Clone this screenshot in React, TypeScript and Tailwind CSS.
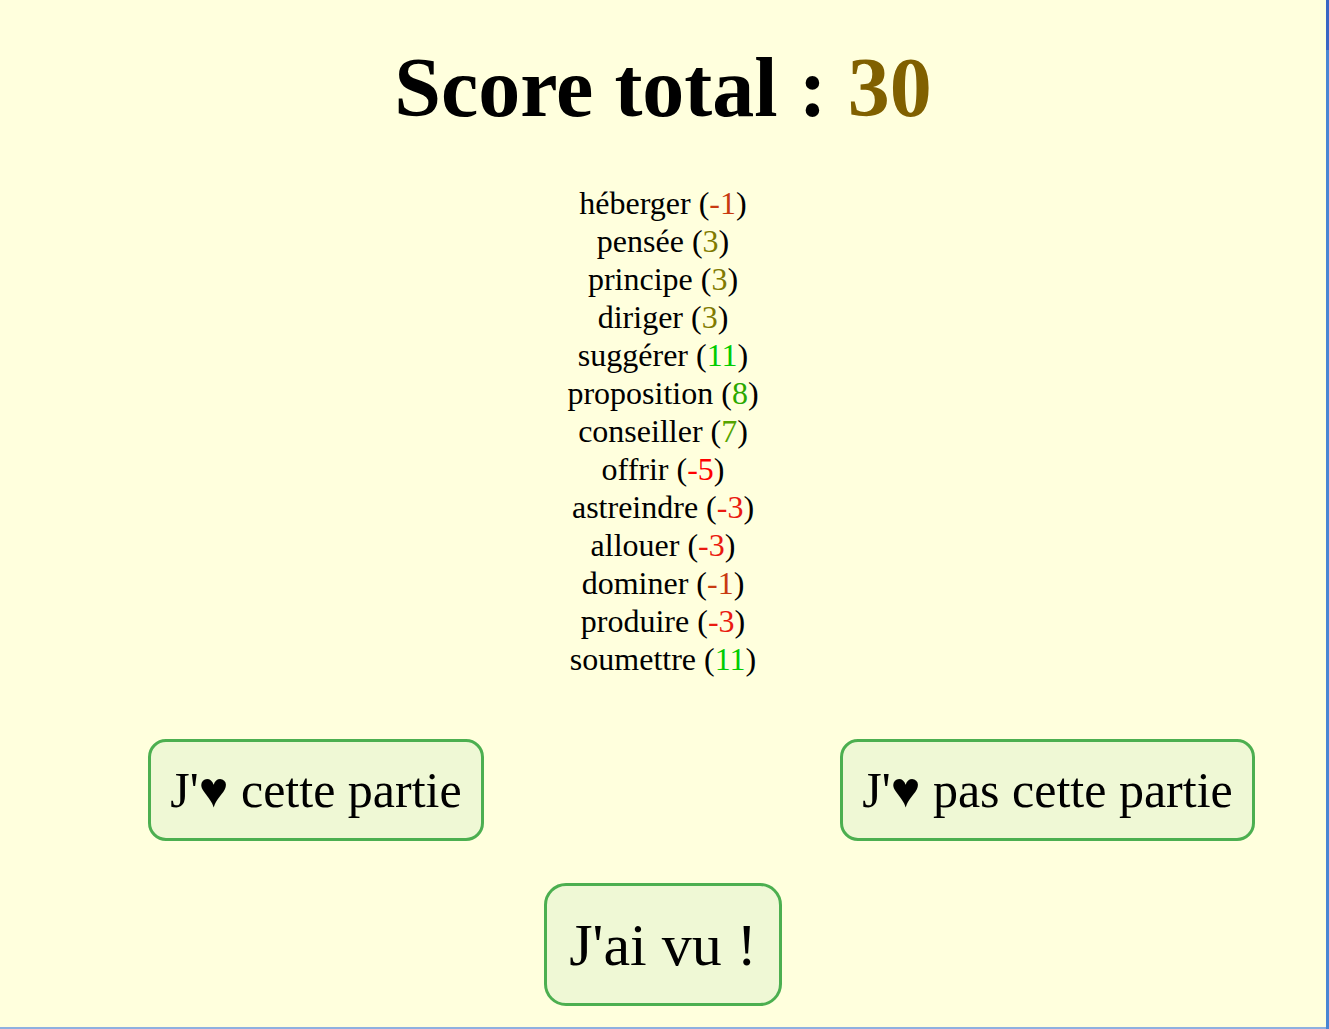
const words = [
  { word: 'héberger', score: '-1', color: 'text-[#c83a10]' },
  { word: 'pensée', score: '3', color: 'text-[#807a00]' },
  { word: 'principe', score: '3', color: 'text-[#807a00]' },
  { word: 'diriger', score: '3', color: 'text-[#807a00]' },
  { word: 'suggérer', score: '11', color: 'text-[#00cc00]' },
  { word: 'proposition', score: '8', color: 'text-[#2aa800]' },
  { word: 'conseiller', score: '7', color: 'text-[#55a400]' },
  { word: 'offrir', score: '-5', color: 'text-[#ff0000]' },
  { word: 'astreindre', score: '-3', color: 'text-[#ea1a10]' },
  { word: 'allouer', score: '-3', color: 'text-[#ea1a10]' },
  { word: 'dominer', score: '-1', color: 'text-[#c83a10]' },
  { word: 'produire', score: '-3', color: 'text-[#ea1a10]' },
  { word: 'soumettre', score: '11', color: 'text-[#00cc00]' },
];

const serif = 'font-["Liberation_Serif",serif]';

export default function App() {
  return (
    <div className="flex h-[1029px] w-full overflow-hidden bg-[#ffffdd]">
      <main className={`flex flex-1 flex-col border-b-2 border-[#8fb0e0] text-black ${serif}`}>
        <h1 className="mt-[40px] text-center text-[84px] font-bold leading-[96px]">
          Score total : <span className="text-[#806000]">30</span>
        </h1>

        <ul className="mt-[48px] flex flex-col items-center text-[32px] leading-[38px]">
          {words.map((w, i) => (
            <li key={i}>
              {w.word} (<span className={w.color}>{w.score}</span>)
            </li>
          ))}
        </ul>

        <div className="mt-[61px] flex justify-between pl-[148px] pr-[71px]">
          <button className="h-[102px] w-[336px] rounded-[18px] border-[3px] border-[#4caf50] bg-[#eff8d5] text-[50px]">
            J'♥ cette partie
          </button>
          <button className="h-[102px] w-[415px] rounded-[18px] border-[3px] border-[#4caf50] bg-[#eff8d5] text-[50px]">
            J'♥ pas cette partie
          </button>
        </div>

        <div className="mt-[42px] flex justify-center">
          <button className="h-[123px] w-[238px] rounded-[22px] border-[3px] border-[#4caf50] bg-[#eff8d5] text-[60px]">
            J'ai vu !
          </button>
        </div>
      </main>
      <div className="flex w-[3px] flex-col bg-[#4a86d4]">
        <div className="h-[50px] bg-[#3a66c4]" />
      </div>
    </div>
  );
}
